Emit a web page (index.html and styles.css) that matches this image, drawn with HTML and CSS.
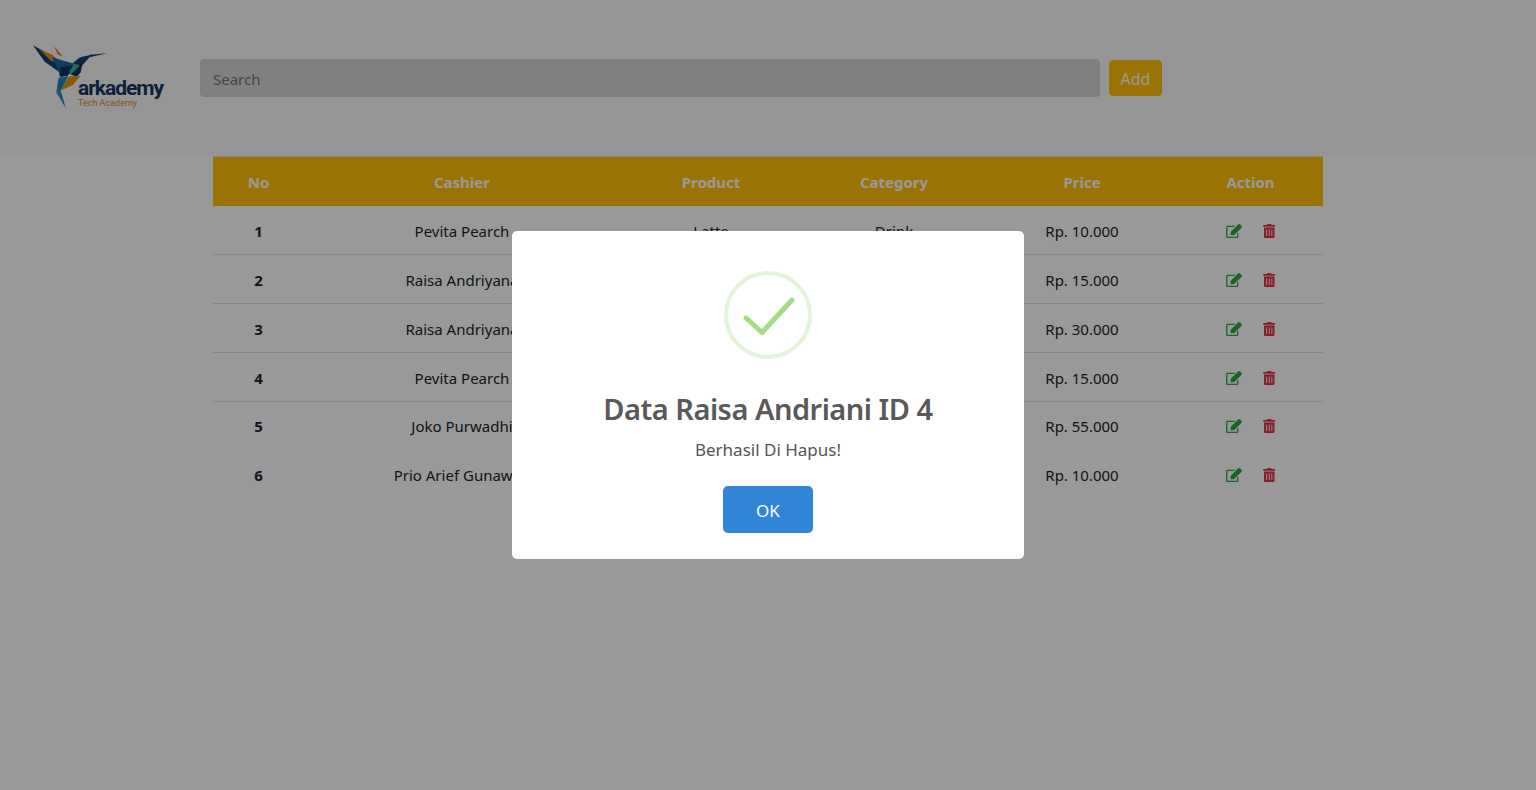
FILE: index.html
```html
<!DOCTYPE html>
<html lang="id">

<head>
    <meta charset="UTF-8" />
    <title>Arkademy Cashier</title>
    <link rel="stylesheet" href="styles.css">
</head>

<body>
    <header class="navbar">
        <div class="brand">
            <svg class="brand-bird" viewBox="0 0 240 200" aria-hidden="true">
                <polygon points="9,6 70,40 112,70 90,88 44,56" fill="#123e73" />
                <polygon points="28,18 70,36 86,62 62,52" fill="#e0930f" />
                <polygon points="73,9 99,41 82,33" fill="#e08a1c" />
                <polygon points="66,42 112,56 132,62 122,90 92,104 86,84" fill="#1c66a6" />
                <polygon points="92,72 130,66 112,100 88,98" fill="#0f3360" />
                <polygon points="128,60 150,42 185,35 152,72 136,66" fill="#143f75" />
                <polygon points="180,35 232,30 178,42" fill="#143f75" />
                <polygon points="134,62 150,66 122,94 118,84" fill="#36b592" />
                <polygon points="150,66 160,48 152,88 140,100 122,94" fill="#102f5a" />
                <polygon points="152,98 116,100 92,142 128,126" fill="#e39412" />
                <polygon points="86,104 114,100 92,142 79,147" fill="#1f82c4" />
                <polygon points="79,147 92,142 108,197" fill="#2c8ccb" />
            </svg>
            <div class="brand-name">
                <span class="brand-title">arkademy</span>
                <span class="brand-sub">Tech Academy</span>
            </div>
        </div>
        <form class="search-form">
            <input class="search-input" type="text" placeholder="Search">
            <button class="btn-add" type="button">Add</button>
        </form>
    </header>

    <table class="data-table">
        <colgroup>
            <col class="col-no">
            <col class="col-cashier">
            <col class="col-product">
            <col class="col-category">
            <col class="col-price">
            <col class="col-action">
        </colgroup>
        <thead>
            <tr>
                <th>No</th>
                <th>Cashier</th>
                <th>Product</th>
                <th>Category</th>
                <th>Price</th>
                <th>Action</th>
            </tr>
        </thead>
        <tbody id="rows"></tbody>
    </table>

    <div class="overlay">
        <div class="modal">
            <svg class="modal-icon" viewBox="0 0 88 88" aria-hidden="true">
                <circle cx="44" cy="44" r="42" fill="none" stroke="#e4f4d8" stroke-width="4" />
                <path d="M22 47 L38 61.500 L68 29" fill="none" stroke="#a5dc86" stroke-width="5" stroke-linecap="round" stroke-linejoin="round" />
            </svg>
            <h2 class="modal-title">Data Raisa Andriani ID 4</h2>
            <p class="modal-text">Berhasil Di Hapus!</p>
            <button class="btn-ok" type="button">OK</button>
        </div>
    </div>

    <svg class="icon-defs" aria-hidden="true">
        <symbol id="icon-edit" viewBox="0 0 576 512">
            <path d="M402.3 344.900l32-32c5-5 13.700-1.500 13.700 5.700V464c0 26.500-21.500 48-48 48H48c-26.500 0-48-21.500-48-48V112c0-26.500 21.500-48 48-48h273.500c7.100 0 10.700 8.600 5.700 13.700l-32 32c-1.500 1.500-3.500 2.300-5.700 2.300H48v352h352V350.500c0-2.100.8-4.100 2.300-5.600zm156.600-201.800L296.300 405.700l-90.400 10c-26.200 2.900-48.500-19.200-45.600-45.600l10-90.400L432.900 17.100c22.900-22.900 59.900-22.900 82.700 0l43.200 43.200c22.900 22.900 22.900 60 .1 82.800z" />
        </symbol>
        <symbol id="icon-trash" viewBox="0 0 448 512">
            <path d="M32 464a48 48 0 0 0 48 48h288a48 48 0 0 0 48-48V128H32zm272-256a16 16 0 0 1 32 0v224a16 16 0 0 1-32 0zm-96 0a16 16 0 0 1 32 0v224a16 16 0 0 1-32 0zm-96 0a16 16 0 0 1 32 0v224a16 16 0 0 1-32 0zM432 32H312l-9.400-18.700A24 24 0 0 0 281.100 0H166.800a23.720 23.720 0 0 0-21.400 13.300L136 32H16A16 16 0 0 0 0 48v32a16 16 0 0 0 16 16h416a16 16 0 0 0 16-16V48a16 16 0 0 0-16-16z" />
        </symbol>
    </svg>

    <script>
        // rows 2-6: product and category sit behind the modal in the picture
        const data = [
            [1, "Pevita Pearch", "Latte", "Drink", "Rp. 10.000"],
            [2, "Raisa Andriyana", "", "", "Rp. 15.000"],
            [3, "Raisa Andriyana", "", "", "Rp. 30.000"],
            [4, "Pevita Pearch", "", "", "Rp. 15.000"],
            [5, "Joko Purwadhi", "", "", "Rp. 55.000"],
            [6, "Prio Arief Gunawan", "", "", "Rp. 10.000"]
        ];

        document.getElementById("rows").innerHTML = data.map(row => `
            <tr>
                <td class="cell-no">${row[0]}</td>
                <td>${row[1]}</td>
                <td>${row[2]}</td>
                <td>${row[3]}</td>
                <td>${row[4]}</td>
                <td>
                    <div class="actions">
                        <svg class="icon-edit"><use href="#icon-edit"></use></svg>
                        <svg class="icon-trash"><use href="#icon-trash"></use></svg>
                    </div>
                </td>
            </tr>`).join("");
    </script>
</body>
</html>
```
FILE: styles.css
```css
* {
    box-sizing: border-box;
}

body {
    margin: 0;
    background-color: #fff;
    color: #212529;
    font-family: "Noto Sans", "Open Sans", sans-serif;
    font-size: 15px;
    overflow: hidden;
}

.navbar {
    display: flex;
    align-items: flex-start;
    height: 156px;
    padding: 43px 0 0 30px;
    background-color: #f8f9fa;
}

.brand {
    position: relative;
    width: 170px;
    height: 70px;
    flex-shrink: 0;
}

.brand-bird {
    display: block;
    width: 80px;
    height: 67px;
}

.brand-name {
    position: absolute;
    left: 48px;
    top: 33px;
    display: flex;
    flex-direction: column;
}

.brand-title {
    font-family: Roboto, sans-serif;
    font-size: 21px;
    font-weight: 700;
    line-height: 24px;
    letter-spacing: -1.05px;
    color: #14365f;
}

.brand-sub {
    font-family: Roboto, sans-serif;
    font-size: 9px;
    line-height: 6px;
    color: #e08a1c;
}

.search-form {
    display: flex;
    align-items: center;
    gap: 9px;
    margin-top: 16px;
}

.search-input {
    width: 900px;
    height: 38px;
    padding: 8px 12px 6px;
    border: 1px solid #ced4da;
    border-radius: 4px;
    background-color: #d5d5d5;
    color: #495057;
    font-family: inherit;
    font-size: 15px;
}

.search-input::placeholder {
    color: #6c757d;
}

.btn-add {
    width: 53px;
    height: 36px;
    padding: 2px 0 0;
    border: 1px solid #ffc107;
    border-radius: 4px;
    background-color: #ffc107;
    color: #fff;
    font-family: inherit;
    font-size: 16px;
}

.data-table {
    width: 1110px;
    margin: 0 0 0 213px;
    border-collapse: collapse;
    table-layout: fixed;
    text-align: center;
}

.col-no { width: 91px; }
.col-cashier { width: 316px; }
.col-product { width: 182px; }
.col-category { width: 184px; }
.col-price { width: 192px; }
.col-action { width: 145px; }

.data-table th {
    height: 49px;
    padding: 2px 0 0;
    border-top: 1px solid #dee2e6;
    background-color: #ffc107;
    color: #fff;
    font-weight: 700;
}

.data-table td {
    height: 49px;
    padding: 2px 0 0;
    border-bottom: 1px solid #dee2e6;
}

.data-table tr:nth-child(n+5) td {
    border-bottom: none;
}

.data-table tr:nth-child(5) td {
    height: 48px;
    padding: 0;
}

.data-table .cell-no {
    font-weight: 700;
}

.actions {
    display: flex;
    align-items: center;
    justify-content: center;
    gap: 21px;
}

.icon-edit {
    width: 16px;
    height: 14px;
    fill: #28a745;
}

.icon-trash {
    width: 12.5px;
    height: 14px;
    fill: #dc3545;
}

.icon-defs {
    display: none;
}

.overlay {
    position: fixed;
    top: 0;
    right: 0;
    bottom: 0;
    left: 0;
    display: flex;
    align-items: center;
    justify-content: center;
    background-color: rgba(0, 0, 0, 0.4);
}

.modal {
    display: flex;
    flex-direction: column;
    align-items: center;
    width: 512px;
    height: 328px;
    padding-top: 40px;
    border-radius: 5px;
    background-color: #fff;
}

.modal-icon {
    display: block;
    width: 88px;
    height: 88px;
}

.modal-title {
    margin: 30px 0 0;
    color: #595959;
    font-size: 29px;
    font-weight: 600;
    line-height: 40px;
    letter-spacing: -0.5px;
}

.modal-text {
    margin: 9px 0 0;
    color: #545454;
    font-size: 17px;
    line-height: 24px;
}

.btn-ok {
    width: 90px;
    height: 47px;
    margin-top: 24px;
    padding: 2px 0 0;
    border: none;
    border-radius: 5px;
    background-color: #3085d6;
    color: #fff;
    font-family: inherit;
    font-size: 17px;
}
```
